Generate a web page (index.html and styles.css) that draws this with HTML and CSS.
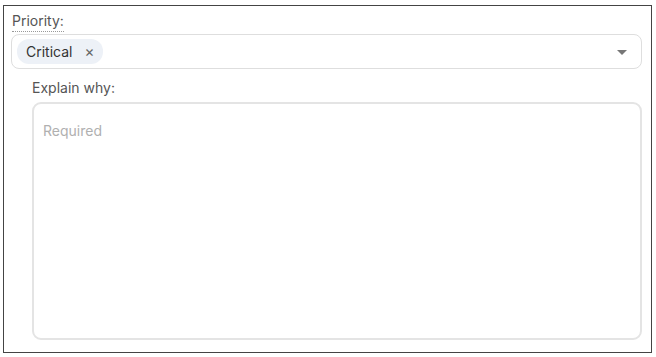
FILE: index.html
```html
<!DOCTYPE html>
<html lang="en">
<head>
    <meta charset="UTF-8">
    <title>Priority</title>
    <link rel="stylesheet" href="styles.css">
</head>
<body>
    <div class="panel">
        <label class="field-label">Priority:</label>

        <div class="select">
            <div class="chips">
                <span class="chip">
                    Critical
                    <span class="chip-remove">&times;</span>
                </span>
            </div>
            <svg class="caret" width="10" height="5" viewBox="0 0 10 5">
                <path d="M0 0 L10 0 L5 5 Z" fill="#777"/>
            </svg>
        </div>

        <div class="reason">
            <div class="reason-label">Explain why:</div>
            <textarea class="reason-input" placeholder="Required"></textarea>
        </div>
    </div>
</body>
</html>
```
FILE: styles.css
```css
* {
    margin: 0;
    padding: 0;
    box-sizing: border-box;
    font-family: Inter, 'Open Sans', sans-serif;
}

body {
    background: #fff;
    color: #3a3a3a;
}

.panel {
    margin: 5px 0 0 3px;
    width: 649px;
    height: 348px;
    border: 1.5px solid #444;
    padding: 4px 9px 0 7px;
}

.field-label {
    display: inline-block;
    font-size: 14px;
    line-height: 18px;
    color: #555;
    padding-bottom: 1px;
    border-bottom: 1px dotted #999;
    margin-left: 1px;
}

.select {
    margin-top: 2px;
    height: 35px;
    border: 1.5px solid #dedede;
    border-radius: 8px;
    display: flex;
    align-items: center;
    justify-content: space-between;
    padding: 0 14px 0 5px;
}

.chip {
    display: inline-flex;
    align-items: center;
    gap: 12px;
    height: 25px;
    padding: 0 9px 0 9px;
    background: #edf1f7;
    border-radius: 12px;
    font-size: 14px;
    color: #333;
}

.chip-remove {
    color: #666;
    font-size: 15px;
}

.caret {
    display: block;
    margin-top: 2px;
}

.reason {
    padding: 10px 0 0 21px;
}

.reason-label {
    font-size: 14px;
    line-height: 18px;
    color: #555;
    margin-bottom: 5px;
}

.reason-input {
    display: block;
    width: 100%;
    height: 238px;
    border: 2px solid #e4e4e4;
    border-radius: 9px;
    resize: none;
    outline: none;
    padding: 18px 9px;
    font-size: 14px;
    color: #333;
}

.reason-input::placeholder {
    color: #b0b0b0;
}
```
